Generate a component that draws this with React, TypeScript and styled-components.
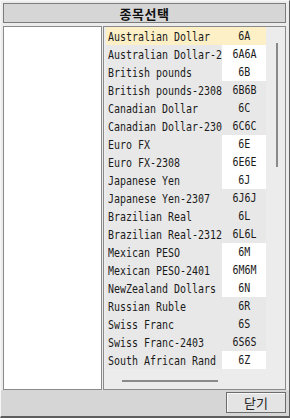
import React from "react";
import styled, { createGlobalStyle } from "styled-components";

const GlobalStyle = createGlobalStyle`
  html, body { margin: 0; padding: 0; background: #ececec; }
  * { box-sizing: border-box; }
`;

const Window = styled.div`
  width: 290px;
  height: 418px;
  background: #ececec;
  border-left: 1px solid #f6f6f6;
  border-top: 1px solid #f6f6f6;
  border-right: 1px solid #5e5e5e;
  border-bottom: 2px solid #5e5e5e;
  display: flex;
  flex-direction: column;
  font-family: "DejaVu Sans Mono", "Noto Sans CJK KR", monospace;
  color: #1e1e1e;
`;

const Header = styled.div`
  margin: 2px 3px 0 2px;
  height: 20px;
  border: 1px solid #7c7c7c;
  background: #d6d6d6;
  display: flex;
  align-items: center;
  justify-content: center;
  font-family: "Noto Sans CJK KR", sans-serif;
  font-weight: 700;
  font-size: 13px;
  letter-spacing: 0.5px;
  color: #111;
`;

const Body = styled.div`
  display: flex;
  gap: 1px;
  padding: 3px 3px 0 2px;
  height: 367px;
`;

const LeftBox = styled.div`
  width: 99px;
  height: 364px;
  background: #ffffff;
  border: 1px solid #8a8a8a;
`;

const RightPanel = styled.div`
  width: 183px;
  height: 364px;
  border: 1px solid #8a8a8a;
  background: #ececec;
  display: grid;
  grid-template-columns: 162px 19px;
  grid-template-rows: 342px 20px;
`;

const List = styled.div`
  grid-column: 1;
  grid-row: 1;
  padding-left: 2px;
  display: flex;
  flex-direction: column;
`;

const Row = styled.div`
  display: flex;
  height: 18px;
`;

const NameCell = styled.div<{ $hi?: boolean }>`
  width: 116px;
  padding-left: 2px;
  background: ${(p) => (p.$hi ? "#fdf0c6" : "#e8e8e8")};
  white-space: nowrap;
  overflow: hidden;
  line-height: 18px;
`;

const CodeCell = styled.div<{ $tone: "hi" | "white" | "gray" }>`
  width: 44px;
  background: ${(p) =>
    p.$tone === "hi" ? "#fdf0c6" : p.$tone === "white" ? "#ffffff" : "#e8e8e8"};
  display: flex;
  justify-content: center;
  white-space: nowrap;
  overflow: hidden;
  line-height: 18px;
`;

const Label = styled.span<{ $center?: boolean }>`
  display: inline-block;
  font-size: 12px;
  line-height: 18px;
  transform: scaleX(0.83);
  transform-origin: ${(p) => (p.$center ? "center" : "left")};
  color: #1a1a1a;
`;

const VScroll = styled.div`
  grid-column: 2;
  grid-row: 1 / span 2;
  padding: 16px 0 0 10px;
`;

const VThumb = styled.div`
  width: 2px;
  height: 124px;
  background: #8a8a8a;
`;

const HScroll = styled.div`
  grid-column: 1;
  grid-row: 2;
  padding: 11px 0 0 18px;
`;

const HThumb = styled.div`
  width: 96px;
  height: 2px;
  background: #8a8a8a;
`;

const Footer = styled.div`
  flex: 1;
  background: #d6d6d6;
  display: flex;
  justify-content: flex-end;
  align-items: flex-start;
  padding: 2px 3px 0 0;
`;

const CloseButton = styled.button`
  width: 60px;
  height: 21px;
  border: 1px solid #6c6c6c;
  box-shadow: inset 1px 1px 0 #f8f8f8;
  background: #e4e4e4;
  font-family: "Noto Sans CJK KR", sans-serif;
  font-size: 13px;
  color: #222;
  padding: 0;
  line-height: 18px;
`;

type Item = { name: string; code: string };

const items: Item[] = [
  { name: "Australian Dollar", code: "6A" },
  { name: "Australian Dollar-2307", code: "6A6A" },
  { name: "British pounds", code: "6B" },
  { name: "British pounds-2308", code: "6B6B" },
  { name: "Canadian Dollar", code: "6C" },
  { name: "Canadian Dollar-2309", code: "6C6C" },
  { name: "Euro FX", code: "6E" },
  { name: "Euro FX-2308", code: "6E6E" },
  { name: "Japanese Yen", code: "6J" },
  { name: "Japanese Yen-2307", code: "6J6J" },
  { name: "Brazilian Real", code: "6L" },
  { name: "Brazilian Real-2312", code: "6L6L" },
  { name: "Mexican PESO", code: "6M" },
  { name: "Mexican PESO-2401", code: "6M6M" },
  { name: "NewZealand Dollars", code: "6N" },
  { name: "Russian Ruble", code: "6R" },
  { name: "Swiss Franc", code: "6S" },
  { name: "Swiss Franc-2403", code: "6S6S" },
  { name: "South African Rand", code: "6Z" },
];

export default function App() {
  return (
    <>
      <GlobalStyle />
      <Window>
        <Header>종목선택</Header>
        <Body>
          <LeftBox />
          <RightPanel>
            <List>
              {items.map((it, i) => {
                const hi = i === 0;
                const tone = hi ? "hi" : Math.floor(i / 3) % 2 === 0 ? "white" : "gray";
                return (
                  <Row key={it.code}>
                    <NameCell $hi={hi}>
                      <Label>{it.name}</Label>
                    </NameCell>
                    <CodeCell $tone={tone}>
                      <Label $center>{it.code}</Label>
                    </CodeCell>
                  </Row>
                );
              })}
            </List>
            <VScroll>
              <VThumb />
            </VScroll>
            <HScroll>
              <HThumb />
            </HScroll>
          </RightPanel>
        </Body>
        <Footer>
          <CloseButton>닫기</CloseButton>
        </Footer>
      </Window>
    </>
  );
}
